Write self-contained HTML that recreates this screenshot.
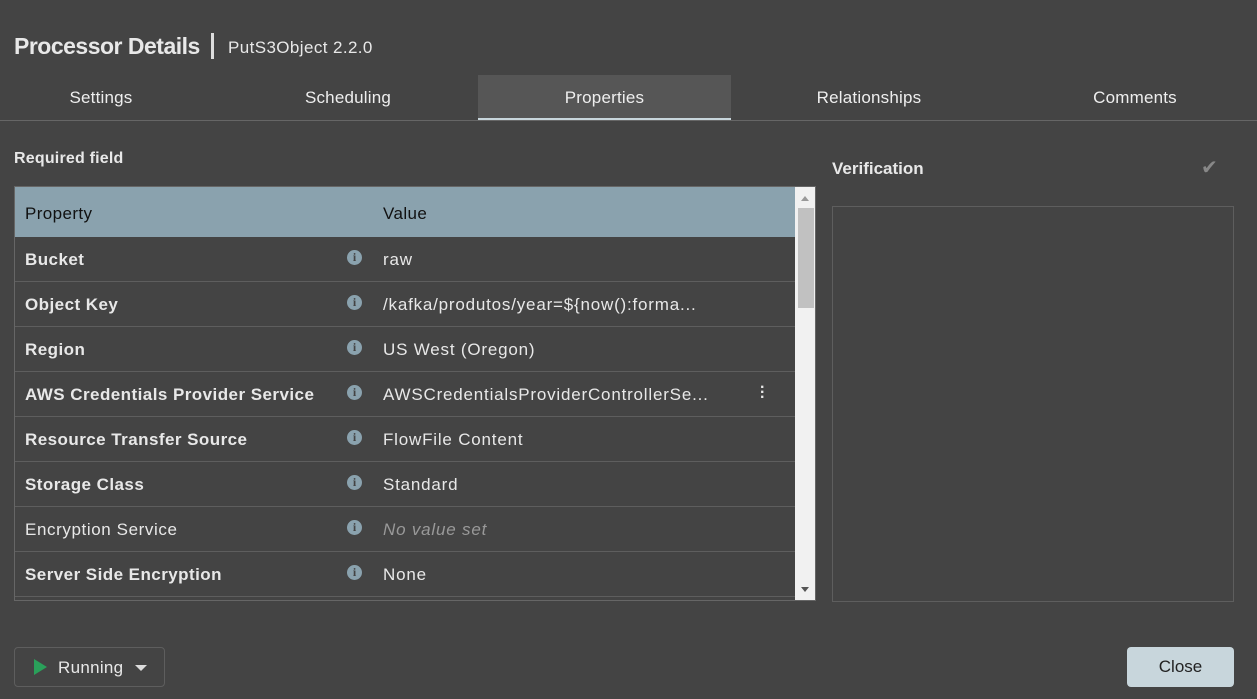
<!DOCTYPE html><html><head><style>
body{margin:0;width:1257px;height:699px;background:#444;font-family:"Liberation Sans",sans-serif;color:#e8e8e8;position:relative;overflow:hidden}
.a{position:absolute}
.tab{position:absolute;top:75px;height:45px;line-height:46px;text-align:center;font-size:17px;color:#eee;letter-spacing:0.2px}
.row{position:absolute;left:15px;width:780px;height:44px;border-bottom:1px solid #5e5e5e;font-size:17px}
.row .p{position:absolute;left:10px;top:13px;font-weight:bold;letter-spacing:0.45px}
.row .v{position:absolute;left:368px;top:13px;letter-spacing:0.8px}
.row .i{position:absolute;left:332px;top:13px;width:15px;height:15px;border-radius:50%;background:#8aa2ae;color:#444;font-size:12px;font-weight:bold;text-align:center;line-height:15px;font-family:"Liberation Serif",serif}
</style></head><body>
<div class="a" style="left:14px;top:33px;font-size:23px;font-weight:bold;letter-spacing:-0.5px">Processor Details</div>
<div class="a" style="left:211px;top:33px;width:3px;height:26px;background:#ddd"></div>
<div class="a" style="left:228px;top:38px;font-size:17px;letter-spacing:0.4px">PutS3Object 2.2.0</div>
<div class="tab" style="left:0;width:202px">Settings</div>
<div class="tab" style="left:222px;width:252px">Scheduling</div>
<div class="tab" style="left:478px;width:253px;background:#565656;border-bottom:2px solid #c8d6dc;height:43px">Properties</div>
<div class="tab" style="left:740px;width:258px">Relationships</div>
<div class="tab" style="left:1010px;width:250px">Comments</div>
<div class="a" style="left:0;top:120px;width:1257px;height:1px;background:#666"></div>
<div class="a" style="left:14px;top:150px;font-size:16px;font-weight:bold;letter-spacing:0.2px">Required field</div>
<div class="a" style="left:14px;top:186px;width:802px;height:415px;border:1px solid #666;box-sizing:border-box;overflow:hidden">
<div class="a" style="left:0;top:0;width:780px;height:50px;background:#8aa2ae;color:#111;font-size:17px"><span class="a" style="left:10px;top:17px;letter-spacing:0.4px">Property</span><span class="a" style="left:368px;top:17px;letter-spacing:0.4px">Value</span></div>
<div class="a" style="left:780px;top:0;width:21px;height:415px;background:#f1f1f1"><div class="a" style="left:3px;top:21px;width:16px;height:100px;background:#c1c1c1"></div><div class="a" style="left:6px;top:9px;border:4px solid transparent;border-bottom:5px solid #999;border-top:0"></div><div class="a" style="left:6px;top:400px;border:4px solid transparent;border-top:5px solid #555;border-bottom:0"></div></div>
</div>
<div class="row" style="top:237px"><span class="p">Bucket</span><span class="i">i</span><span class="v">raw</span></div>
<div class="row" style="top:282px"><span class="p">Object Key</span><span class="i">i</span><span class="v">/kafka/produtos/year=${now():forma...</span></div>
<div class="row" style="top:327px"><span class="p">Region</span><span class="i">i</span><span class="v">US West (Oregon)</span></div>
<div class="row" style="top:372px"><span class="p">AWS Credentials Provider Service</span><span class="i">i</span><span class="v">AWSCredentialsProviderControllerSe...</span><span class="a" style="left:745px;top:13px;font-weight:bold;line-height:5px;font-size:16px">·<br>·<br>·</span></div>
<div class="row" style="top:417px"><span class="p">Resource Transfer Source</span><span class="i">i</span><span class="v">FlowFile Content</span></div>
<div class="row" style="top:462px"><span class="p">Storage Class</span><span class="i">i</span><span class="v">Standard</span></div>
<div class="row" style="top:507px"><span class="p" style="font-weight:normal;letter-spacing:0.6px">Encryption Service</span><span class="i">i</span><span class="v" style="font-style:italic;color:#999">No value set</span></div>
<div class="row" style="top:552px"><span class="p">Server Side Encryption</span><span class="i">i</span><span class="v">None</span></div>
<div class="a" style="left:832px;top:159px;font-size:17px;font-weight:bold">Verification</div>
<div class="a" style="left:1201px;top:155px;font-size:20px;color:#888">✔</div>
<div class="a" style="left:832px;top:206px;width:402px;height:396px;border:1px solid #5e5e5e;box-sizing:border-box"></div>
<div class="a" style="left:14px;top:647px;width:151px;height:40px;border:1px solid #5e5e5e;border-radius:4px;box-sizing:border-box">
<div class="a" style="left:19px;top:11px;border-left:13px solid #2aa05a;border-top:8px solid transparent;border-bottom:8px solid transparent"></div>
<span class="a" style="left:43px;top:10px;font-size:17px;letter-spacing:0.3px">Running</span>
<div class="a" style="left:120px;top:17px;border:6px solid transparent;border-top:6px solid #ddd;border-bottom:0"></div></div>
<div class="a" style="left:1127px;top:647px;width:107px;height:40px;background:#c8d6dc;border-radius:4px;color:#222;font-size:17px;text-align:center;line-height:40px">Close</div>
</body></html>
